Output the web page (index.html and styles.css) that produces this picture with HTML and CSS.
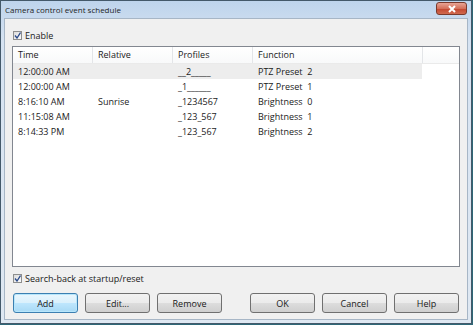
FILE: index.html
```html
<!DOCTYPE html>
<html lang="en">
<head>
<meta charset="UTF-8">
<meta name="viewport" content="width=device-width, initial-scale=1.0">
<title>Camera control event schedule</title>
<link rel="stylesheet" href="styles.css">
</head>
<body>

<div class="window">
  <div class="titlebar">
    <span class="title">Camera control event schedule</span>
    <span class="close">
      <svg width="10" height="8" viewBox="0 0 10 8"><path d="M2 1 L8 7 M8 1 L2 7" stroke="#fff" stroke-width="2"/></svg>
    </span>
  </div>
  <div class="client">
    <label class="check-row enable">
      <span class="box"><svg width="7" height="7" viewBox="0 0 7 7"><path d="M1 3.5 L3 6 L6.5 0.5" fill="none" stroke="#2a4a8a" stroke-width="1.3"/></svg></span>
      <span>Enable</span>
    </label>

    <div class="list">
      <div class="row head">
        <div class="cell">Time</div>
        <div class="cell">Relative</div>
        <div class="cell">Profiles</div>
        <div class="cell">Function</div>
        <div class="cell filler"></div>
      </div>
      <div class="row selected">
        <div class="cell">12:00:00 AM</div>
        <div class="cell"></div>
        <div class="cell">__2_____</div>
        <div class="cell">PTZ Preset&nbsp;&nbsp;2</div>
      </div>
      <div class="row">
        <div class="cell">12:00:00 AM</div>
        <div class="cell"></div>
        <div class="cell">_1______</div>
        <div class="cell">PTZ Preset&nbsp;&nbsp;1</div>
      </div>
      <div class="row">
        <div class="cell">8:16:10 AM</div>
        <div class="cell">Sunrise</div>
        <div class="cell">_1234567</div>
        <div class="cell">Brightness&nbsp;&nbsp;0</div>
      </div>
      <div class="row">
        <div class="cell">11:15:08 AM</div>
        <div class="cell"></div>
        <div class="cell">_123_567</div>
        <div class="cell">Brightness&nbsp;&nbsp;1</div>
      </div>
      <div class="row">
        <div class="cell">8:14:33 PM</div>
        <div class="cell"></div>
        <div class="cell">_123_567</div>
        <div class="cell">Brightness&nbsp;&nbsp;2</div>
      </div>
    </div>

    <label class="check-row searchback">
      <span class="box"><svg width="7" height="7" viewBox="0 0 7 7"><path d="M1 3.5 L3 6 L6.5 0.5" fill="none" stroke="#2a4a8a" stroke-width="1.3"/></svg></span>
      <span>Search-back at startup/reset</span>
    </label>

    <div class="buttons">
      <div class="group">
        <button class="btn default">Add</button>
        <button class="btn">Edit...</button>
        <button class="btn">Remove</button>
      </div>
      <div class="group">
        <button class="btn">OK</button>
        <button class="btn">Cancel</button>
        <button class="btn">Help</button>
      </div>
    </div>
  </div>
</div>

</body>
</html>
```
FILE: styles.css
```css
html, body {
  margin: 0;
  padding: 0;
  background: #2f6878;
}

.window {
  width: 472px;
  height: 324px;
  box-sizing: border-box;
  border: 1px solid #44596a;
  background: linear-gradient(#bed4ec, #d6e3f2 40px, #dfe8f2);
  display: flex;
  flex-direction: column;
  padding: 0 3px 3px 3px;
  font-family: "Open Sans", "Noto Sans", sans-serif;
  font-size: 9px;
  color: #1a1a1a;
}

.titlebar {
  height: 17px;
  display: flex;
  align-items: center;
  justify-content: space-between;
  flex-shrink: 0;
}

.title {
  font-size: 8px;
  padding-left: 1px;
  color: #1e1e1e;
}

.close {
  width: 31px;
  height: 13px;
  margin-top: -2px;
  margin-right: 1px;
  box-sizing: border-box;
  border: 1px solid #7a3a2c;
  border-radius: 3px;
  background: linear-gradient(#e8a494, #d4705a 50%, #c3452e 51%, #d06a4f);
  display: flex;
  align-items: center;
  justify-content: center;
}

.client {
  flex: 1;
  background: #f0f0f0;
  border: 1px solid #a7b6c6;
  padding: 0 7px 0 7px;
  display: flex;
  flex-direction: column;
}

.check-row {
  display: flex;
  align-items: center;
  gap: 3px;
  height: 13px;
  padding-left: 1px;
}

.enable {
  margin-top: 10px;
}

.box {
  width: 9px;
  height: 9px;
  box-sizing: border-box;
  border: 1px solid #8e8f8f;
  background: linear-gradient(135deg, #dcdcdc, #fbfbfb);
  display: flex;
  align-items: center;
  justify-content: center;
}

.list {
  margin-top: 4px;
  height: 221px;
  box-sizing: border-box;
  border: 1px solid #828790;
  background: #fff;
}

.row {
  display: grid;
  grid-template-columns: 80px 80px 80px 170px 1fr;
  height: 15px;
  align-items: center;
}

.row.selected {
  background: linear-gradient(90deg, #ededed 409px, #fff 409px);
}

.row.head {
  height: 16px;
  border-bottom: 1px solid #eaeaea;
  background: linear-gradient(#ffffff, #f8f9fa);
}

.cell {
  padding-left: 5px;
  white-space: nowrap;
}

.head .cell {
  height: 16px;
  line-height: 16px;
  border-right: 1px solid #e3e5e8;
  box-sizing: border-box;
}

.head .filler {
  border-right: none;
}

.searchback {
  margin-top: 5px;
}

.buttons {
  margin-top: 8px;
  display: flex;
  justify-content: space-between;
  padding: 0 1px;
}

.group {
  display: flex;
  gap: 7px;
}

.btn {
  width: 65px;
  height: 20px;
  border: 1px solid #707070;
  border-radius: 3px;
  background: linear-gradient(#f2f2f2, #ebebeb 50%, #dddddd 51%, #cfcfcf);
  font-family: inherit;
  font-size: 9px;
  color: #1a1a1a;
  padding: 0;
}

.btn.default {
  border-color: #3c7fb1;
  background: linear-gradient(#eaf6fd, #d9f0fc 50%, #bee6fd 51%, #a7d9f5);
  box-shadow: inset 0 0 0 1px #b7e6fb;
}
```
